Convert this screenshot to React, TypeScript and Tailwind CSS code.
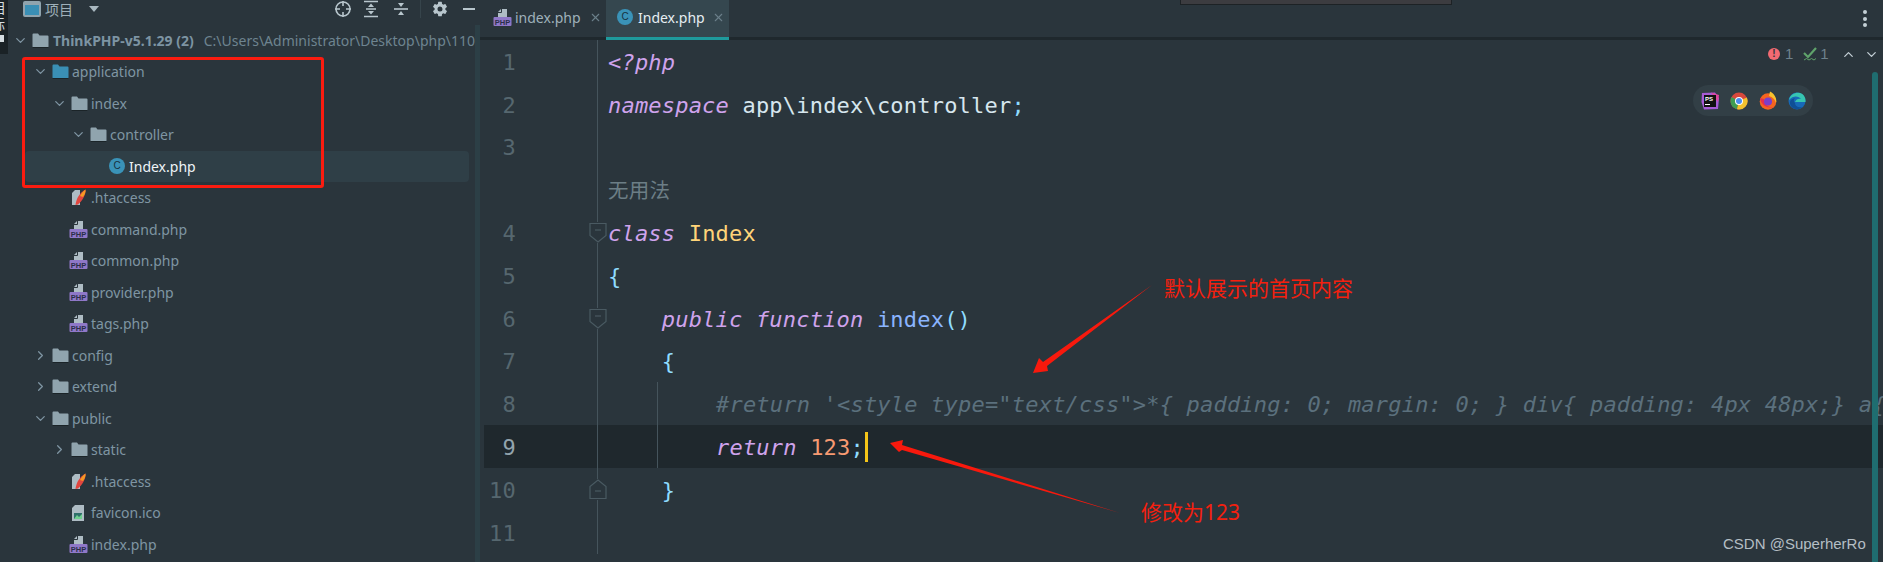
import React from 'react';
import { ChevronDown, ChevronRight, ChevronUp, X } from 'lucide-react';
import { IoSettingsSharp } from 'react-icons/io5';

const CJK = 'font-["Noto_Sans","Noto_Sans_CJK_SC",sans-serif]';

const FolderIcon = ({ color = '#90a4ae' }: { color?: string }) => (
    <svg width="17" height="15" viewBox="0 0 17 15" className="shrink-0">
        <path d="M0.5 1.5 A1 1 0 0 1 1.5 0.5 H6 L7.5 2.5 H15.5 A1 1 0 0 1 16.5 3.5 V13.5 A1 1 0 0 1 15.5 14.5 H1.5 A1 1 0 0 1 0.5 13.5 Z" fill={color} />
        <path d="M0.5 14.5 H16.5" stroke="#1b2428" strokeWidth="1" />
    </svg>
);

const PhpIcon = () => (
    <svg width="19" height="19" viewBox="0 0 19 19" className="shrink-0 -ml-[2px]">
        <path d="M5 9 V4 L8 1 H14 V9 Z" fill="#aebcc4" />
        <path d="M5 4.5 H8.5 V1" fill="none" stroke="#2a353c" strokeWidth="1" />
        <rect x="0.5" y="9" width="18" height="9" rx="1" fill="#8f78c8" />
        <text x="9.5" y="16.5" textAnchor="middle" fontSize="7.5" fontWeight="700" fontFamily="Liberation Sans, sans-serif" fill="#2a2f4a">PHP</text>
    </svg>
);

const ApacheIcon = () => (
    <svg width="16" height="17" viewBox="0 0 16 17" className="shrink-0">
        <path d="M1 4 L4 1 H9 V16 H1 Z" fill="#aebcc4" />
        <path d="M4.5 16 C5 10 9 3 14.5 0.5 C15 6 11 12 7 15.5 Z" fill="#e2463f" />
        <path d="M9 7 C10.500 4 12.500 2 14.500 0.500 C15 3 13.500 6 12 8 Z" fill="#f59a23" />
    </svg>
);

const IcoIcon = () => (
    <svg width="15" height="18" viewBox="0 0 15 18" className="shrink-0">
        <path d="M1 4 L4 1 H13 V17 H1 Z" fill="#aebcc4" />
        <rect x="3" y="9" width="8" height="6" fill="#2f6f6a" />
        <path d="M3 15 L6 11 L8 13 L11 10 V15 Z" fill="#6fcf8f" />
    </svg>
);

const ClassIcon = ({ size = 16 }: { size?: number }) => (
    <span style={{ width: size, height: size }} className='shrink-0 rounded-full bg-[#3a93b8] flex items-center justify-center text-[10px] leading-none text-[#17323f] font-["Liberation_Sans",sans-serif]'>
        C
    </span>
);

type TreeRow = {
    label: string;
    level: number;
    kind: 'folder' | 'blue' | 'php' | 'apache' | 'ico' | 'class';
    open?: boolean;
    closed?: boolean;
    selected?: boolean;
};

const TREE: TreeRow[] = [
    { label: 'application', level: 1, kind: 'blue', open: true },
    { label: 'index', level: 2, kind: 'folder', open: true },
    { label: 'controller', level: 3, kind: 'folder', open: true },
    { label: 'Index.php', level: 4, kind: 'class', selected: true },
    { label: '.htaccess', level: 2, kind: 'apache' },
    { label: 'command.php', level: 2, kind: 'php' },
    { label: 'common.php', level: 2, kind: 'php' },
    { label: 'provider.php', level: 2, kind: 'php' },
    { label: 'tags.php', level: 2, kind: 'php' },
    { label: 'config', level: 1, kind: 'folder', closed: true },
    { label: 'extend', level: 1, kind: 'folder', closed: true },
    { label: 'public', level: 1, kind: 'folder', open: true },
    { label: 'static', level: 2, kind: 'folder', closed: true },
    { label: '.htaccess', level: 2, kind: 'apache' },
    { label: 'favicon.ico', level: 2, kind: 'ico' },
    { label: 'index.php', level: 2, kind: 'php' },
];

const INDENT: Record<number, string> = {
    0: 'pl-[5px]',
    1: 'pl-[24px]',
    2: 'pl-[43px]',
    3: 'pl-[62px]',
    4: 'pl-[64px] ml-[17px] mr-[6px] rounded-[4px] bg-[#2f3f47]',
};

const rowIcon = (kind: TreeRow['kind']) => {
    if (kind === 'folder') return <FolderIcon />;
    if (kind === 'blue') return <FolderIcon color="#3a8fb5" />;
    if (kind === 'php') return <PhpIcon />;
    if (kind === 'apache') return <ApacheIcon />;
    if (kind === 'ico') return <IcoIcon />;
    return <ClassIcon />;
};

const Sidebar = () => (
    <aside className={`w-[467px] shrink-0 flex flex-col overflow-hidden ${CJK}`}>
        {/* tool window header */}
        <div className="h-[24.5px] shrink-0 flex items-center pb-[6px] text-[#8b9ea9] relative">
            <span className="ml-[15px] w-[18px] h-[16px] border-[2px] border-[#90a4ae] border-t-[4px] rounded-[2px] bg-[#3a8fb5]" />
            <span className="ml-[4px] text-[14px] text-[#9fb0b9]">项目</span>
            <span className="ml-[16px] w-0 h-0 border-x-[5px] border-x-transparent border-t-[6px] border-t-[#a9b8c0]" />
            <div className="ml-auto flex items-center text-[#b8c6cd]">
                <svg width="18" height="18" viewBox="0 0 18 18" className="mr-[11px]">
                    <circle cx="9" cy="9" r="7" fill="none" stroke="currentColor" strokeWidth="1.6" />
                    <path d="M9 1 V6 M9 12 V17 M1 9 H6 M12 9 H17" stroke="currentColor" strokeWidth="1.6" />
                </svg>
                <svg width="16" height="18" viewBox="0 0 16 18" className="mr-[14px]">
                    <path d="M1 1.500 H15 M1 16.500 H15 M3 9 H13" stroke="currentColor" strokeWidth="1.6" />
                    <path d="M8 3.500 L5 7 H11 Z M8 14.500 L5 11 H11 Z" fill="currentColor" />
                </svg>
                <svg width="16" height="18" viewBox="0 0 16 18" className="mr-[11px]">
                    <path d="M1 9 H15" stroke="currentColor" strokeWidth="1.6" />
                    <path d="M8 7 L5 3 H11 Z M8 11 L5 15 H11 Z" fill="currentColor" />
                </svg>
                <span className="w-px h-[18px] bg-[#36444b] mr-[11px]" />
                <IoSettingsSharp size={16} className="mr-[15px]" />
                <span className="w-[13px] h-[2px] bg-current -mr-[1px]" />
            </div>
        </div>

        {/* project root */}
        <div className="h-[31.5px] shrink-0 flex items-center pl-[5px] text-[14px] whitespace-nowrap">
            <ChevronDown size={15} className="shrink-0 text-[#7f95a3] mr-[1px]" />
            <span className="ml-[3px]"><FolderIcon /></span>
            <span className="ml-[4px] font-bold text-[#7d94a3]">ThinkPHP-v5.1.29 (2)</span>
            <span className="ml-[10px] text-[#6e8490]">C:\Users\Administrator\Desktop\php\110\ThinkPHP</span>
        </div>

        {TREE.map((row, i) => (
            <div key={i} className={`h-[31.5px] shrink-0 flex items-center text-[14px] ${INDENT[row.level]}`}>
                <span className="w-4 shrink-0 flex justify-center text-[#7f95a3]">
                    {row.open && <ChevronDown size={15} />}
                    {row.closed && <ChevronRight size={15} />}
                </span>
                <span className="w-4 ml-1 shrink-0 flex items-center">{rowIcon(row.kind)}</span>
                <span className={`ml-1 ${row.selected ? 'text-[#eef4f7]' : 'text-[#7f95a3]'}`}>{row.label}</span>
            </div>
        ))}
    </aside>
);

const Kw = ({ children }: { children: React.ReactNode }) => <span className="italic text-[#cfa3ec]">{children}</span>;
const Br = ({ children }: { children: React.ReactNode }) => <span className="text-[#8fdcff]">{children}</span>;

type CodeLine = {
    n?: number;
    code?: React.ReactNode;
    fold?: 'down' | 'up';
    guide?: boolean;
    current?: boolean;
};

const LINES: CodeLine[] = [
    { n: 1, code: <Kw>{'<?php'}</Kw> },
    { n: 2, code: <><Kw>namespace</Kw> <span className="text-[#d6e6ee]">{'app\\index\\controller'}</span><Br>;</Br></> },
    { n: 3 },
    { code: <span className={`not-italic text-[20.5px] text-[#6c7e86] ${CJK}`}>无用法</span> },
    { n: 4, fold: 'down', code: <><Kw>class</Kw> <span className="text-[#ffd479]">Index</span></> },
    { n: 5, code: <Br>{'{'}</Br> },
    { n: 6, fold: 'down', code: <>{'    '}<Kw>public function</Kw> <span className="text-[#8ab4ff]">index</span><Br>()</Br></> },
    { n: 7, code: <>{'    '}<Br>{'{'}</Br></> },
    { n: 8, guide: true, code: <span className="italic text-[#5b707d]">{`#return '<style type="text/css">*{ padding: 0; margin: 0; } div{ padding: 4px 48px;} a{`}</span> },
    { n: 9, guide: true, current: true, code: <span><Kw>return</Kw> <span className="text-[#f79a72]">123</span><Br>;</Br></span> },
    { n: 10, fold: 'up', code: <>{'    '}<Br>{'}'}</Br></> },
    { n: 11 },
];

const FoldMark = ({ up }: { up: boolean }) => (
    <svg width="18" height="21" viewBox="0 0 18 21" className="absolute right-[-9.5px] top-[11px] bg-[#2a353c]">
        <path d={up ? 'M1 19.500 H17 V7.500 L9 1 L1 7.500 Z' : 'M1 1.500 H17 V13.500 L9 20 L1 13.500 Z'} fill="#2a353c" stroke="#4a5a62" strokeWidth="1.200" />
        <path d={up ? 'M6 12 H12' : 'M6 8 H12'} stroke="#4a5a62" strokeWidth="1.200" />
    </svg>
);

const Editor = () => (
    <main className="flex-1 min-w-0 flex flex-col overflow-hidden">
        {/* tabs */}
        <div className={`h-[40px] shrink-0 flex items-stretch border-b-[3px] border-[#1f282d] text-[14px] ${CJK}`}>
            <div className="w-[126px] flex items-center pl-[15px] pb-[3px] text-[#9fb1ba]">
                <PhpIcon />
                <span className="ml-[3px]">index.php</span>
                <X size={13} className="ml-[8px] text-[#6b7f8a]" />
            </div>
            <div className="w-[123px] flex items-center pl-[11px] pb-[3px] bg-[#35474f] border-b-[3px] border-[#1e9a9c] -mb-[3px] text-[#e6eef2]">
                <ClassIcon />
                <span className="ml-[5px]">Index.php</span>
                <X size={13} className="ml-[7px] text-[#6b7f8a]" />
            </div>
            <div className="ml-auto flex flex-col justify-center gap-[2.500px] pr-[16px]">
                <span className="w-[4px] h-[4px] rounded-full bg-[#c4d0d6]" />
                <span className="w-[4px] h-[4px] rounded-full bg-[#c4d0d6]" />
                <span className="w-[4px] h-[4px] rounded-full bg-[#c4d0d6]" />
            </div>
        </div>

        {/* code */}
        <div className='pl-[4px] font-["DejaVu_Sans_Mono",monospace] text-[22px] tracking-[0.2px] whitespace-pre'>
            {LINES.map((line, i) => (
                <div key={i} className={`h-[42.8px] flex items-center ${line.current ? 'bg-[#1f282d]' : ''}`}>
                    <div className={`relative w-[114px] h-full shrink-0 border-r border-[#45545c] flex items-center ${line.current ? 'text-[#93a4ad]' : 'text-[#56676f]'}`}>
                        <span className="w-[32px] pt-[2px] text-right">{line.n}</span>
                        {line.fold && <FoldMark up={line.fold === 'up'} />}
                    </div>
                    {line.guide ? (
                        <div className="ml-[59px] h-full flex items-center border-l border-[#45545c] pl-[58px]">
                            <span className="pt-[2px]">{line.code}</span>
                            {line.current && <span className="w-[3px] h-[30px] bg-[#f5c518] ml-[1px]" />}
                        </div>
                    ) : (
                        <div className="ml-[10px] pt-[2px]">{line.code}</div>
                    )}
                </div>
            ))}
        </div>
    </main>
);

const Dock = () => (
    <div className="absolute left-[1693px] top-[85px] w-[120px] h-[31px] rounded-full bg-[#323f46] flex items-center pl-[8px] gap-[11px]">
        <svg width="18" height="18" viewBox="0 0 18 18">
            <path d="M1 1 L14 0.500 L18 6 L17 17 L3 17.500 L0.500 10 Z" fill="#a65bd6" />
            <path d="M10 0.500 L18 3 L17 10 Z" fill="#e0479e" />
            <rect x="3" y="3" width="12" height="12" fill="#111" />
            <text x="4" y="9" fontSize="6" fontWeight="700" fontFamily="Liberation Sans, sans-serif" fill="#fff">PS</text>
            <rect x="4" y="12" width="5" height="1" fill="#fff" />
        </svg>
        <svg width="18" height="18" viewBox="0 0 18 18">
            <circle cx="9" cy="9" r="8.500" fill="#d8483c" />
            <path d="M9 9 L1.500 5 A8.500 8.500 0 0 0 7 17.300 Z" fill="#3f9d52" />
            <path d="M9 9 L7 17.300 A8.500 8.500 0 0 0 16.800 5.500 Z" fill="#f2c230" />
            <circle cx="9" cy="9" r="4" fill="#fff" />
            <circle cx="9" cy="9" r="3" fill="#4a8df0" />
        </svg>
        <svg width="18" height="19" viewBox="0 0 18 19">
            <circle cx="9" cy="10.500" r="8.300" fill="#f5641f" />
            <path d="M11 0.500 C16 3 18 8 17 12 C15 6 12 6 10 5 Z" fill="#f9c22e" />
            <path d="M1 7 C2 14 8 18 14 16 C9 17 5 13 5 8 Z" fill="#e5304f" />
            <circle cx="9" cy="10.500" r="4" fill="#7b3fc9" />
        </svg>
        <svg width="18" height="18" viewBox="0 0 18 18">
            <circle cx="9" cy="9" r="8.500" fill="#1769b8" />
            <path d="M1 8 C2 2 8 0 12 1 C16 2 18 6 17.500 10 H7 C8 7 11 6 13 7 C11 4 5 3 1 8 Z" fill="#37c5b0" />
            <path d="M7 11 C7 14 10 16 14 15 C12 17.500 8 18 5 16 C2 14 1 10 3 8 C4 7 6 6 7 6 C5 8 6 10 7 11 Z" fill="#0f4f96" />
        </svg>
    </div>
);

const Inspections = () => (
    <div className='absolute left-[1768px] top-[46px] h-[16px] flex items-center font-["Liberation_Sans",sans-serif] text-[15px] text-[#6e828d]'>
        <span className="w-[12px] h-[12px] rounded-full bg-[#f26a72] flex items-center justify-center text-[10px] font-bold leading-none text-[#2a353c]">!</span>
        <span className="ml-[5px]">1</span>
        <svg width="14" height="14" viewBox="0 0 14 14" className="ml-[10px]">
            <path d="M1 6 L5 10 L13 1" fill="none" stroke="#5fa36b" strokeWidth="2.200" />
            <path d="M1 13 L3.500 11.500 L6 13 L8.500 11.500 L11 13 L13 11.500" fill="none" stroke="#5fa36b" strokeWidth="1" />
        </svg>
        <span className="ml-[3px]">1</span>
        <ChevronUp size={15} className="ml-[12px] text-[#c4d0d6]" />
        <ChevronDown size={15} className="ml-[8px] text-[#c4d0d6]" />
    </div>
);

const App: React.FC = () => {
    return (
        <div className="relative w-[1883px] h-[562px] flex overflow-hidden bg-[#2a353c]">
            {/* clipped activity bar */}
            <div className={`w-[8px] shrink-0 self-start h-[54px] overflow-hidden bg-[#1a2226] text-[14px] leading-[16px] text-[#d5dde1] ${CJK}`}>
                <div className="-ml-[8px]">目</div>
                <div className="-ml-[9px]">标</div>
                <div className="mt-[3px] w-[4px] h-[7px] bg-[#d5dde1]" />
            </div>
            <Sidebar />
            <div className="w-[5px] shrink-0 mt-[25px] bg-[#2c3f46]" />
            <Editor />

            {/* popup edge at the top of the window */}
            <div className="absolute left-[1180px] top-0 w-[272px] h-[5px] bg-[#3c3c40] border-x border-b border-[#1d2225]" />

            {/* editor scrollbar */}
            <div className="absolute left-[1872px] top-[72px] bottom-0 w-[6px] rounded-t-[3px] bg-[#1f6d70]" />

            <Inspections />
            <Dock />

            {/* red annotations drawn over the screenshot */}
            <div className="absolute left-[22px] top-[57px] w-[302px] h-[131px] border-[3px] border-[#fb1c10] rounded-[3px]" />
            <svg width="1883" height="562" className="absolute left-0 top-0 pointer-events-none">
                <polygon points="1152,285 1047,366 1048,371 1033,373 1039,358 1043,362" fill="#f8190d" />
                <polygon points="1120,513 902,450 899,452 890,443 903,440 902,445" fill="#f8190d" />
            </svg>
            <span className={`absolute left-[1164px] top-[273px] text-[21px] leading-[30px] text-[#f4200f] ${CJK}`}>默认展示的首页内容</span>
            <span className={`absolute left-[1141px] top-[497px] text-[21px] leading-[30px] text-[#f4200f] ${CJK}`}>修改为123</span>
            <span className='absolute left-[1723px] top-[534px] text-[15px] leading-[20px] text-[#b4bec4] font-["Liberation_Sans",sans-serif]'>CSDN @SuperherRo</span>
        </div>
    );
};

export default App;
